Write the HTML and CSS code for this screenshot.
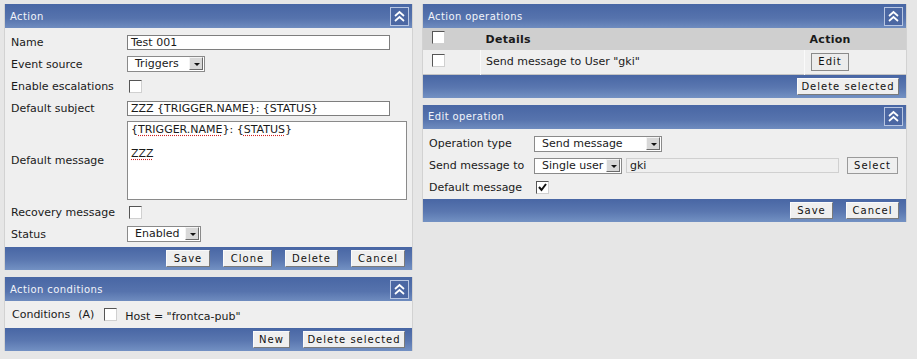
FILE: index.html
```html
<!DOCTYPE html>
<html lang="en">
<head>
    <meta charset="UTF-8">
    <title>Action</title>
    <link rel="stylesheet" href="styles.css">
</head>
<body>
    <div class="page">
        <div class="col col-left">
            <div class="panel">
                <div class="panel-head">
                    <span class="panel-title">Action</span>
                    <span class="toggle"><svg width="17" height="17" viewBox="0 0 17 17"><polyline points="4,8 8.5,4 13,8" /><polyline points="4,13 8.5,9 13,13" /></svg></span>
                </div>
                <div class="form form-left">
                    <div class="label">Name</div>
                    <div class="field"><div class="input w-text">Test 001</div></div>

                    <div class="label">Event source</div>
                    <div class="field"><div class="select w-event">Triggers<span class="arrow"></span></div></div>

                    <div class="label">Enable escalations</div>
                    <div class="field"><span class="cb"></span></div>

                    <div class="label">Default subject</div>
                    <div class="field"><div class="input w-text">ZZZ {TRIGGER.NAME}: {STATUS}</div></div>

                    <div class="label">Default message</div>
                    <div class="field">
                        <div class="textarea">
                            <div>{<span class="spell">TRIGGER.NAME</span>}: {<span class="spell">STATUS</span>}</div>
                            <div>&nbsp;</div>
                            <div><span class="spell">ZZZ</span></div>
                        </div>
                    </div>

                    <div class="label">Recovery message</div>
                    <div class="field"><span class="cb"></span></div>

                    <div class="label">Status</div>
                    <div class="field"><div class="select w-status">Enabled<span class="arrow"></span></div></div>
                </div>
                <div class="panel-foot">
                    <button class="btn btn-save">Save</button>
                    <button class="btn btn-clone">Clone</button>
                    <button class="btn btn-delete">Delete</button>
                    <button class="btn btn-cancel">Cancel</button>
                </div>
            </div>

            <div class="panel">
                <div class="panel-head">
                    <span class="panel-title">Action conditions</span>
                    <span class="toggle"><svg width="17" height="17" viewBox="0 0 17 17"><polyline points="4,8 8.5,4 13,8" /><polyline points="4,13 8.5,9 13,13" /></svg></span>
                </div>
                <div class="conditions">
                    <span class="cond-label">Conditions</span>
                    <span class="cond-letter">(A)</span>
                    <span class="cb"></span>
                    <span class="cond-text">Host = "frontca-pub"</span>
                </div>
                <div class="panel-foot">
                    <button class="btn btn-new">New</button>
                    <button class="btn btn-delsel">Delete selected</button>
                </div>
            </div>
        </div>

        <div class="col col-right">
            <div class="panel">
                <div class="panel-head">
                    <span class="panel-title">Action operations</span>
                    <span class="toggle"><svg width="17" height="17" viewBox="0 0 17 17"><polyline points="4,8 8.5,4 13,8" /><polyline points="4,13 8.5,9 13,13" /></svg></span>
                </div>
                <table class="ops">
                    <tr class="ops-head">
                        <th class="c-check"><span class="cb"></span></th>
                        <th class="c-details">Details</th>
                        <th class="c-action">Action</th>
                    </tr>
                    <tr class="ops-row">
                        <td class="c-check"><span class="cb"></span></td>
                        <td class="c-details">Send message to User "gki"</td>
                        <td class="c-action"><button class="btn btn-edit">Edit</button></td>
                    </tr>
                </table>
                <div class="panel-foot">
                    <button class="btn btn-delsel2">Delete selected</button>
                </div>
            </div>

            <div class="panel">
                <div class="panel-head">
                    <span class="panel-title">Edit operation</span>
                    <span class="toggle"><svg width="17" height="17" viewBox="0 0 17 17"><polyline points="4,8 8.5,4 13,8" /><polyline points="4,13 8.5,9 13,13" /></svg></span>
                </div>
                <div class="form form-right">
                    <div class="label">Operation type</div>
                    <div class="field"><div class="select w-optype">Send message<span class="arrow"></span></div></div>

                    <div class="label">Send message to</div>
                    <div class="field field-send">
                        <div class="select w-user">Single user<span class="arrow"></span></div>
                        <div class="input input-ro">gki</div>
                        <button class="btn btn-select">Select</button>
                    </div>

                    <div class="label">Default message</div>
                    <div class="field"><span class="cb checked"><svg width="11" height="11" viewBox="0 0 11 11"><polyline points="2,5 4.5,8 9,2" /></svg></span></div>
                </div>
                <div class="panel-foot">
                    <button class="btn btn-save2">Save</button>
                    <button class="btn btn-cancel2">Cancel</button>
                </div>
            </div>
        </div>
    </div>
</body>
</html>
```

FILE: styles.css
```css
body {
    margin: 0;
    background-color: #e6e6e6;
    font-family: "DejaVu Sans", Verdana, sans-serif;
    font-size: 11px;
    color: #1a1a1a;
}
.page {
    display: flex;
    padding: 4px;
    gap: 9px;
    align-items: flex-start;
}
.col {
    display: flex;
    flex-direction: column;
    gap: 7px;
}
.col-left { width: 409px; }
.col-right { width: 485px; }
.panel {
    background-color: #efefef;
    border-left: 1px solid #d2d2d2;
    border-right: 1px solid #d2d2d2;
}
.panel-head {
    height: 24px;
    display: flex;
    align-items: center;
    justify-content: space-between;
    padding: 0 3px 0 5px;
    background: linear-gradient(#4866a4, #5673ad 60%, #6f8cbf);
    color: #f2f4fa;
    font-size: 10px;
    letter-spacing: 0.4px;
}
.toggle {
    width: 17px;
    height: 17px;
    border: 1px solid #b8c6e2;
    background-color: #4b67a3;
    display: flex;
}
.toggle polyline {
    fill: none;
    stroke: #ffffff;
    stroke-width: 1.7;
}
.panel-foot {
    height: 23px;
    display: flex;
    align-items: center;
    justify-content: flex-end;
    gap: 13px;
    padding-right: 7px;
    background: linear-gradient(#4866a4, #5a77b0 55%, #7391c3);
}
.btn {
    height: 17px;
    padding: 0;
    font-family: "DejaVu Sans", Verdana, sans-serif;
    font-size: 10px;
    letter-spacing: 1px;
    color: #111;
    background-color: #efefef;
    border: 1px solid;
    border-color: #fafafa #7a7a7a #7a7a7a #fafafa;
}
.btn-save { width: 44px; }
.btn-clone { width: 49px; }
.btn-delete { width: 53px; }
.btn-cancel { width: 54px; }
.btn-new { width: 37px; }
.btn-delsel { width: 102px; }
.btn-delsel2 { width: 102px; }
.btn-save2 { width: 43px; }
.btn-cancel2 { width: 53px; }
.btn-edit {
    width: 38px;
    height: 18px;
    border-color: #8a8a8a;
    background-color: #ececec;
}
.btn-select {
    width: 51px;
    height: 17px;
    margin-left: 8px;
    border-color: #9a9a9a;
}

/* forms */
.form {
    display: grid;
    align-items: center;
}
.form-left {
    grid-template-columns: 122px 1fr;
    grid-template-rows: 22px 22px 22px 22px 82px 22px 22px;
    padding: 3px 0 2px;
}
.form-right {
    grid-template-columns: 111px 1fr;
    grid-template-rows: 22px 22px 22px;
    padding: 4px 0 0;
}
.label {
    padding-left: 6px;
    white-space: nowrap;
}
.field {
    display: flex;
    align-items: center;
}
.input {
    height: 13px;
    line-height: 13px;
    padding: 0 3px;
    background-color: #fff;
    border: 1px solid #7e7e7e;
    white-space: nowrap;
}
.w-text { width: 255px; }
.input-ro {
    width: 205px;
    background-color: #efefef;
    border-color: #d0d0d0;
    margin-left: 4px;
}
.select {
    height: 14px;
    line-height: 14px;
    padding-left: 7px;
    background-color: #fff;
    border: 1px solid #8a8a8a;
    position: relative;
    white-space: nowrap;
}
.arrow {
    position: absolute;
    right: 1px;
    top: 0;
    width: 14px;
    height: 13px;
    background-color: #d8d8d8;
    border: 1px solid;
    border-color: #f4f4f4 #6a6a6a #6a6a6a #f4f4f4;
    box-sizing: border-box;
}
.arrow::after {
    content: "";
    position: absolute;
    left: 4px;
    top: 5px;
    border-left: 3px solid transparent;
    border-right: 3px solid transparent;
    border-top: 3px solid #111;
}
.w-event { width: 69px; }
.w-status { width: 65px; }
.w-optype { width: 119px; }
.w-user { width: 79px; }
.cb {
    display: inline-block;
    width: 11px;
    height: 11px;
    background-color: #fff;
    border: 1px solid;
    border-color: #555 #d0d0d0 #d0d0d0 #555;
    margin-left: 2px;
}
.cb svg polyline {
    fill: none;
    stroke: #111;
    stroke-width: 2;
}
.textarea {
    width: 275px;
    height: 75px;
    padding: 2px 0 0 3px;
    background-color: #fff;
    border: 1px solid #8a8a8a;
    line-height: 12px;
}
.spell {
    text-decoration: underline dotted #d02020;
    text-underline-offset: 2px;
}

/* conditions */
.conditions {
    height: 27px;
    display: flex;
    align-items: center;
    padding-left: 7px;
}
.cond-letter { margin-left: 8px; }
.conditions .cb { margin-left: 10px; }
.cond-text { margin-left: 8px; margin-top: 3px; }

/* operations table */
.ops {
    width: 100%;
    border-collapse: collapse;
}
.ops th, .ops td {
    padding: 0 0 0 5px;
    text-align: left;
}
.ops-head {
    height: 22px;
    background-color: #cfcfcf;
}
.ops-head th {
    font-weight: bold;
    letter-spacing: 0.3px;
}
.ops-row {
    height: 24px;
    background-color: #efefef;
    border-bottom: 1px solid #c4c4c4;
}
.ops-row td {
    border-right: 1px solid #fafafa;
}
.ops-row td.c-action { border-right: none; }
.ops-row td.c-details { border-left: 1px solid #fafafa; }
.c-check {
    width: 50px;
    padding-left: 7px !important;
}
.c-action { width: 95px; }
.ops-row .c-action { padding-left: 6px; }
```
